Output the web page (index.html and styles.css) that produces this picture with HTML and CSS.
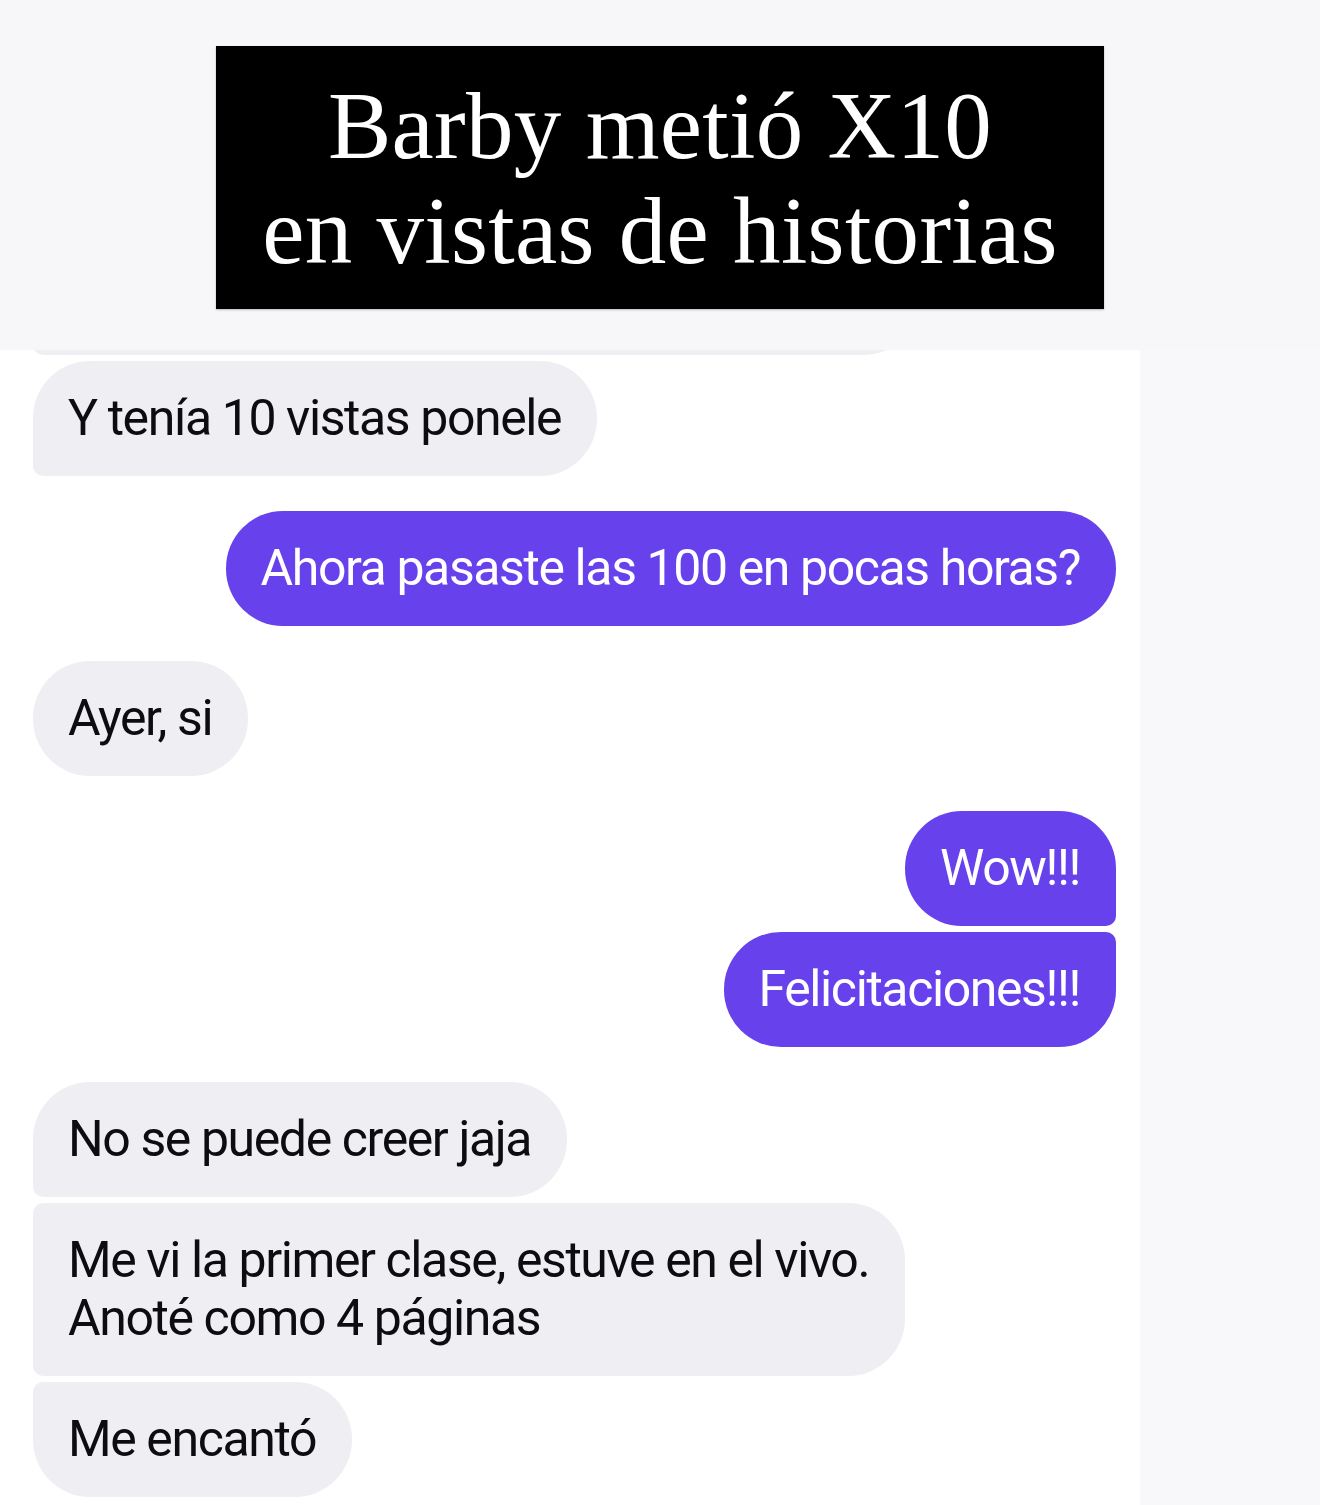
FILE: index.html
```html
<!DOCTYPE html>
<html>
<head>
    <meta charset="UTF-8">
    <title>Barby metió X10</title>
    <link rel="stylesheet" href="styles.css">
</head>
<body>
    <div class="top">
        <h1 class="title">Barby metió X10<br>en vistas de historias</h1>
    </div>
    <div class="page">
        <div class="chat">
            <div class="msg in"><div class="bubble peek mid"></div></div>
            <div class="msg in last"><div class="bubble first">Y tenía 10 vistas ponele</div></div>

            <div class="msg out last"><div class="bubble">Ahora pasaste las 100 en pocas horas?</div></div>

            <div class="msg in last"><div class="bubble">Ayer, si</div></div>

            <div class="msg out"><div class="bubble first">Wow!!!</div></div>
            <div class="msg out last"><div class="bubble end">Felicitaciones!!!</div></div>

            <div class="msg in"><div class="bubble first">No se puede creer jaja</div></div>
            <div class="msg in"><div class="bubble mid">Me vi la primer clase, estuve en el vivo.<br>Anoté como 4 páginas</div></div>
            <div class="msg in"><div class="bubble end">Me encantó</div></div>
        </div>
        <div class="side"></div>
    </div>
</body>
</html>
```

FILE: styles.css
```css
html, body, h1 {margin: 0; padding: 0;}
body {background: #f7f7f9; font-family: Roboto, "Noto Sans", Arial, sans-serif; width: 1320px; height: 1505px; overflow: hidden;}

.top {height: 350px; padding-top: 46px; box-sizing: border-box;}
.title {width: 888px; height: 263px; margin: 0 auto; padding-top: 28px; box-sizing: border-box; background: #000; color: #fff; text-align: center; font-family: "Liberation Serif", "Times New Roman", serif; font-weight: normal; font-size: 95px; line-height: 105px; letter-spacing: 0.3px; box-shadow: 0 1px 2px #bbb;}

.page {display: flex; height: 1155px;}
.chat {width: 1140px; background: #fff; padding: 0 24px 0 33px; box-sizing: border-box; overflow: hidden; display: flex; flex-direction: column; gap: 6px;}
.side {flex: 1; background: #f8f8fb;}

.msg {display: flex;}
.msg.last {margin-bottom: 29px;}
.msg.out {justify-content: flex-end;}

.bubble {padding: 28px 36px 29px 35px; font-size: 50px; line-height: 58px; letter-spacing: -1.4px; border-radius: 57px; white-space: nowrap;}
.in .bubble {background: #efeff3; color: #0d0d10;}
.out .bubble {background: #6641ec; color: #fff;}

.in .first {border-bottom-left-radius: 10px;}
.in .mid {border-top-left-radius: 10px; border-bottom-left-radius: 10px;}
.in .end {border-top-left-radius: 10px;}
.out .first {border-bottom-right-radius: 10px;}
.out .end {border-top-right-radius: 10px;}

.peek {width: 887px; height: 115px; padding: 0; box-sizing: border-box; margin-top: -110px;}
```
